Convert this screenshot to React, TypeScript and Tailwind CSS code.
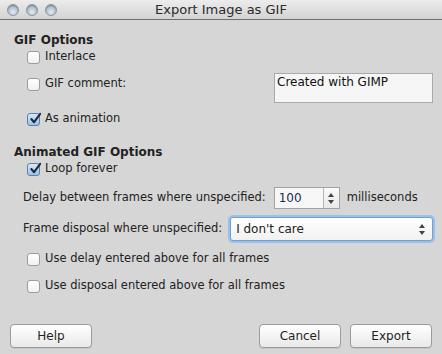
import React from "react";

function Light() {
  return (
    <span className="inline-block h-[12px] w-[12px] rounded-full border border-[#8d959c] bg-[radial-gradient(circle_at_50%_70%,#e4ecf1_0%,#b4c2cc_55%,#8e9ba5_100%)] shadow-[inset_0_1px_1px_rgba(0,0,0,0.25)]" />
  );
}

function Check({ checked = false }: { checked?: boolean }) {
  return (
    <span
      className={
        checked
          ? "relative inline-flex h-[13px] w-[13px] shrink-0 items-center justify-center rounded-[3px] border border-[#5e7fa8] bg-[linear-gradient(180deg,#d6e8fa_0%,#9cc2ea_100%)]"
          : "relative inline-flex h-[13px] w-[13px] shrink-0 items-center justify-center rounded-[3px] border border-[#9c9c9c] bg-[linear-gradient(180deg,#ffffff_0%,#f1f1f1_100%)]"
      }
    >
      {checked ? (
        <svg viewBox="0 0 14 14" className="absolute left-[1px] top-[-2px] h-[13px] w-[13px]">
          <path d="M2.5 7.5 L5.5 11 L12 2" fill="none" stroke="#1e2a3a" strokeWidth="2.2" strokeLinecap="round" strokeLinejoin="round" />
        </svg>
      ) : null}
    </span>
  );
}

function CheckRow({ label, checked, className = "" }: { label: string; checked?: boolean; className?: string }) {
  return (
    <div className={`flex h-[18px] items-center gap-[5px] pl-[27px] ${className}`}>
      <Check checked={checked} />
      <span>{label}</span>
    </div>
  );
}

function Arrows() {
  return (
    <span className="flex flex-col items-center gap-[3px]">
      <span className="h-0 w-0 border-x-[3px] border-b-[4px] border-x-transparent border-b-[#444]" />
      <span className="h-0 w-0 border-x-[3px] border-t-[4px] border-x-transparent border-t-[#444]" />
    </span>
  );
}

function Button({ label, className = "" }: { label: string; className?: string }) {
  return (
    <button className={`flex h-[24px] w-[82px] items-center justify-center rounded-[4px] border border-[#9b9b9b] bg-[linear-gradient(180deg,#ffffff_0%,#f4f4f4_50%,#e9e9e9_100%)] text-[#1f1f1f] shadow-[0_1px_0_rgba(0,0,0,0.08)] ${className}`}>
      {label}
    </button>
  );
}

export default function App() {
  return (
    <div className="flex h-[354px] w-[442px] flex-col overflow-hidden bg-[#d6d6d6] font-['DejaVu_Sans',sans-serif] text-[11.5px] text-[#222]">
      <div className="relative flex h-[20px] shrink-0 items-center border-b border-[#6f6f6f] bg-[linear-gradient(180deg,#ececec_0%,#d3d3d3_100%)] pl-[7px]">
        <div className="flex gap-[7px]">
          <Light />
          <Light />
          <Light />
        </div>
        <div className="absolute inset-x-0 top-0 flex h-[20px] items-center justify-center text-[13px] text-[#2a2a2a]">
          Export Image as GIF
        </div>
      </div>

      <div className="flex flex-col">
        <div className="mt-[12px] flex h-[16px] items-center pl-[14px] text-[12px] font-bold">GIF Options</div>
        <CheckRow label="Interlace" />
        <div className="flex items-start">
          <CheckRow label="GIF comment:" className="mt-[9px]" />
          <div className="ml-auto mr-[9px] mt-[7px] h-[30px] w-[159px] border border-[#a9a9a9] bg-[#f6f6f6] px-[2px] text-[12px] leading-[16px] text-[#111]">
            Created with GIMP
          </div>
        </div>
        <CheckRow label="As animation" checked className="mt-[7px]" />

        <div className="mt-[16px] flex h-[16px] items-center pl-[14px] text-[12px] font-bold">Animated GIF Options</div>
        <CheckRow label="Loop forever" checked />

        <div className="mt-[9px] flex h-[22px] items-center pl-[23px]">
          <span>Delay between frames where unspecified:</span>
          <div className="ml-[8px] flex h-[22px] w-[66px] border border-[#a3a3a3] bg-[#f7f7f7]">
            <span className="flex flex-1 items-center pl-[4px] text-[12px] text-[#1d2b4f]">100</span>
            <span className="flex w-[16px] items-center justify-center border-l border-[#b5b5b5] bg-[linear-gradient(180deg,#fbfbfb_0%,#e8e8e8_100%)]">
              <Arrows />
            </span>
          </div>
          <span className="ml-[7px]">milliseconds</span>
        </div>

        <div className="mt-[8px] flex h-[24px] items-center pl-[23px]">
          <span>Frame disposal where unspecified:</span>
          <div className="ml-[8px] mr-[9px] flex h-[24px] flex-1 items-center rounded-[3px] border border-[#6e9fd6] bg-[linear-gradient(180deg,#ffffff_0%,#f1f1f1_100%)] pl-[5px] pr-[7px] shadow-[0_0_0_2px_#9cc0e8]">
            <span className="flex-1 text-[12px]">I don&apos;t care</span>
            <Arrows />
          </div>
        </div>

        <CheckRow label="Use delay entered above for all frames" className="mt-[9px]" />
        <CheckRow label="Use disposal entered above for all frames" className="mt-[9px]" />

        <div className="mt-[29px] flex items-center px-[10px] text-[12px]">
          <Button label="Help" />
          <Button label="Cancel" className="ml-auto" />
          <Button label="Export" className="ml-[9px]" />
        </div>
      </div>
    </div>
  );
}
